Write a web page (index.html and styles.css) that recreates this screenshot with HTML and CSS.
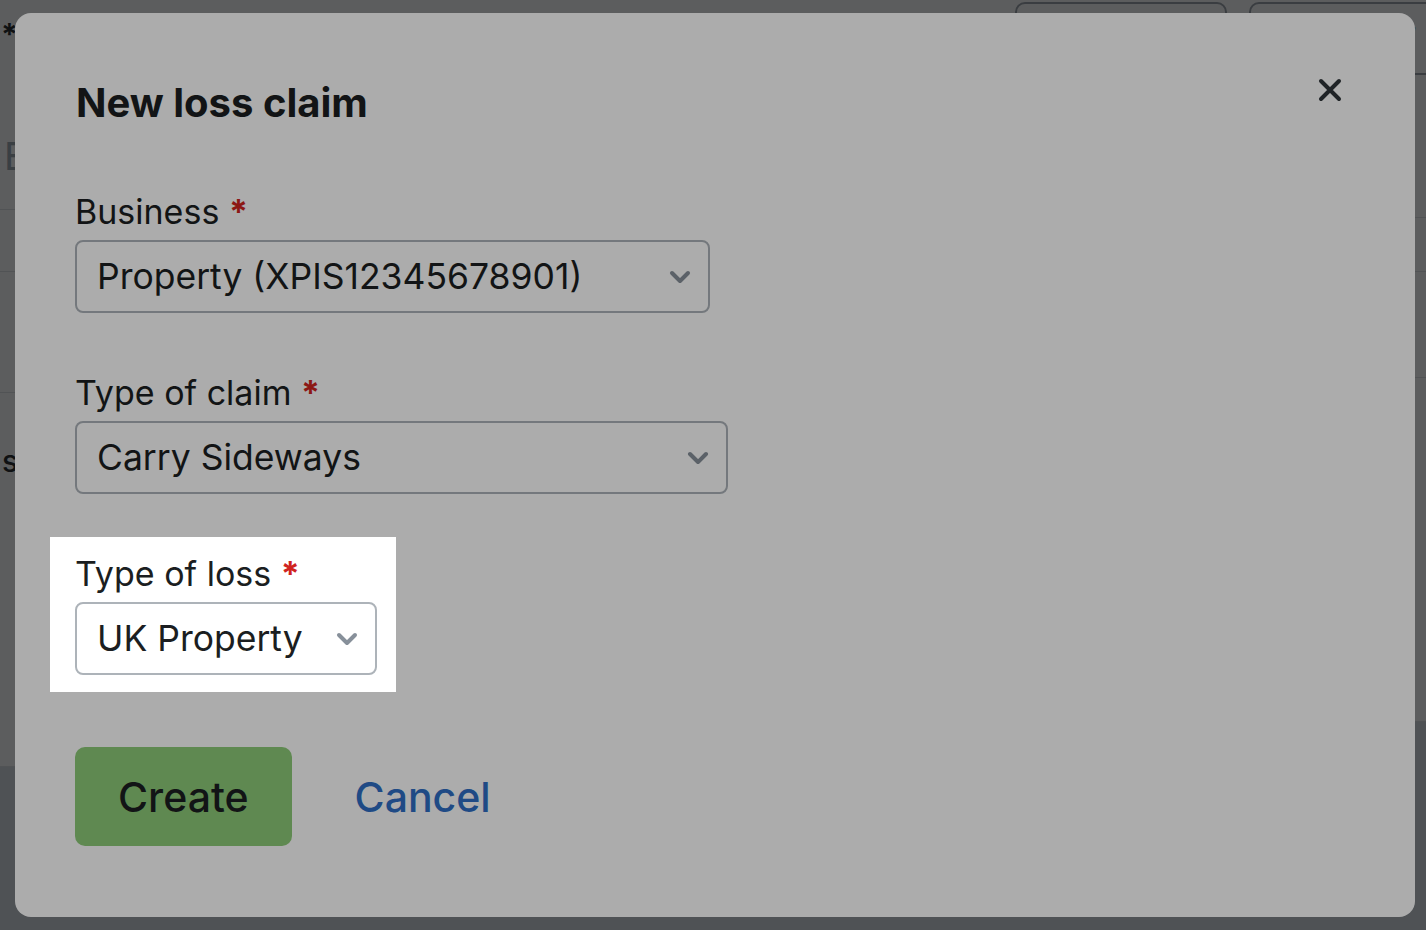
FILE: index.html
```html
<!DOCTYPE html>
<html lang="en">
<head>
    <meta charset="UTF-8">
    <meta name="viewport" content="width=device-width, initial-scale=1.0">
    <title>Loss claims</title>
    <link rel="stylesheet" href="styles.css">
</head>
<body>
    <!-- claims page underneath the dialog -->
    <div class="page">
        <div class="page-col">
            <div class="row row-head">
                <span class="req-mark">*</span>
                <span class="page-title">E</span>
            </div>
            <div class="row row-a"></div>
            <div class="row row-b"></div>
            <div class="row row-c"><span class="row-text">s</span></div>
            <div class="row-foot"></div>
        </div>
        <div class="page-col">
            <div class="row row-actions">
                <button class="btn-outline">Download</button>
                <button class="btn-outline btn-outline-link">Import /</button>
            </div>
            <div class="row row-d"></div>
            <div class="row row-e"></div>
            <div class="row row-f"></div>
            <div class="row row-g"></div>
            <div class="row-foot"></div>
        </div>
    </div>

    <div class="backdrop">
        <div class="modal" role="dialog" aria-labelledby="modal-title">
            <div class="modal-header">
                <h2 class="modal-title" id="modal-title">New loss claim</h2>
                <button class="modal-close" aria-label="Close">
                    <svg width="24" height="24" viewBox="0 0 24 24" fill="none" stroke="currentColor" stroke-width="4" stroke-linecap="round">
                        <path d="M3 3L21 21M21 3L3 21"/>
                    </svg>
                </button>
            </div>

            <div class="modal-body">
                <div class="field">
                    <label class="field-label">Business <span class="req">*</span></label>
                    <button class="select select-business">
                        <span>Property (XPIS12345678901)</span>
                        <svg class="chevron" width="22" height="14" viewBox="0 0 22 14"><path d="M3 3l8 8 8-8"/></svg>
                    </button>
                </div>

                <div class="field">
                    <label class="field-label">Type of claim <span class="req">*</span></label>
                    <button class="select select-claim">
                        <span>Carry Sideways</span>
                        <svg class="chevron" width="22" height="14" viewBox="0 0 22 14"><path d="M3 3l8 8 8-8"/></svg>
                    </button>
                </div>

                <!-- highlighted by the onboarding tour -->
                <div class="field field-spotlight">
                    <label class="field-label">Type of loss <span class="req">*</span></label>
                    <button class="select select-loss">
                        <span>UK Property</span>
                        <svg class="chevron" width="22" height="14" viewBox="0 0 22 14"><path d="M3 3l8 8 8-8"/></svg>
                    </button>
                </div>
            </div>

            <div class="modal-actions">
                <button class="btn-create">Create</button>
                <a class="link-cancel" href="#">Cancel</a>
            </div>
        </div>
    </div>
</body>
</html>
```

FILE: styles.css
```css
* {
    box-sizing: border-box;
}
html, body {
    margin: 0;
    height: 100%;
}
body {
    font-family: Inter, 'Noto Sans', sans-serif;
    color: #1b1e21;
    background: #fff;
    overflow: hidden;
}

/* page behind the dialog */
.page {
    display: grid;
    grid-template-columns: 700px 760px;
    min-height: 100vh;
}
.page-col {
    display: flex;
    flex-direction: column;
}
.row {
    border-bottom: 1px solid #dde1e5;
}
.row-head {
    height: 210px;
    padding: 14px 0 0 1px;
    display: flex;
    flex-direction: column;
}
.req-mark {
    font-size: 30px;
    font-weight: 700;
    line-height: 40px;
}
.page-title {
    margin: 80px 0 0 3px;
    font-size: 38px;
    line-height: 44px;
    color: #9ba5b0;
}
.row-a { height: 62px; }
.row-b { height: 121px; }
.row-c {
    height: 374px;
    padding: 50px 0 0 2px;
}
.row-text {
    font-size: 30px;
    font-weight: 500;
}
.row-foot {
    flex: 1;
    background: #d9dfe4;
}
.row-actions {
    height: 75px;
    display: flex;
    gap: 22px;
    padding: 2px 0 0 315px;
}
.btn-outline {
    width: 212px;
    height: 73px;
    border: 2px solid #9aa1a8;
    border-radius: 10px;
    background: #fff;
    font: 500 28px Inter, sans-serif;
    color: #1b1e21;
    text-align: left;
    padding: 0 0 0 60px;
    white-space: nowrap;
}
.btn-outline-link {
    color: #2e6ec5;
}
.row-d { height: 143px; }
.row-e { height: 54px; }
.row-f { height: 106px; }
.row-g { height: 344px; }

/* dialog */
.backdrop {
    position: fixed;
    inset: 0;
    background: rgba(17, 21, 26, 0.5);
    display: flex;
    padding: 13px 11px 13px 15px;
}
.modal {
    flex: 1;
    background: #fff;
    border-radius: 16px;
    padding: 66px 61px 66px 60px;
}
.modal-header {
    display: flex;
    justify-content: space-between;
    align-items: flex-start;
}
.modal-title {
    margin: 0 0 0 1px;
    font-size: 40px;
    line-height: 48px;
    font-weight: 700;
}
.modal-close {
    width: 40px;
    height: 40px;
    margin: -9px 4px 0 0;
    padding: 0;
    border: 0;
    background: none;
    color: #2e3439;
    display: grid;
    place-items: center;
    cursor: pointer;
}
.modal-body {
    margin-top: 65px;
    display: flex;
    flex-direction: column;
    align-items: flex-start;
    gap: 60px;
}
.field {
    display: flex;
    flex-direction: column;
}
.field-label {
    font-size: 34px;
    line-height: 40px;
    margin-bottom: 8px;
}
.req {
    color: #d0241f;
    font-weight: 700;
}
.select {
    height: 73px;
    border: 2px solid #adb3b9;
    border-radius: 8px;
    background: #fff;
    padding: 0 17px 0 20px;
    display: flex;
    align-items: center;
    justify-content: space-between;
    font: 400 35.5px Inter, sans-serif;
    color: #1b1e21;
    cursor: pointer;
}
.select-business { width: 635px; }
.select-claim { width: 653px; }
.select-loss { width: 302px; }
.chevron {
    flex: none;
    fill: none;
    stroke: #87909a;
    stroke-width: 4;
    stroke-linecap: round;
    stroke-linejoin: round;
}

/* tour spotlight: darkens everything round the field */
.field-spotlight {
    position: relative;
}
.field-spotlight::after {
    content: "";
    position: absolute;
    top: -17px;
    right: -19px;
    bottom: -17px;
    left: -25px;
    box-shadow: 0 0 0 2400px rgba(0, 0, 0, 0.325);
    pointer-events: none;
    z-index: 5;
}

.modal-actions {
    margin-top: 72px;
    display: flex;
    align-items: center;
    gap: 63px;
}
.btn-create {
    height: 99px;
    padding: 0 43px;
    border: 0;
    border-radius: 10px;
    background: #8dcc79;
    font: 500 41px Inter, sans-serif;
    color: #1b1e21;
    cursor: pointer;
}
.link-cancel {
    font-size: 41px;
    font-weight: 500;
    color: #2e6ec5;
    text-decoration: none;
}
```
